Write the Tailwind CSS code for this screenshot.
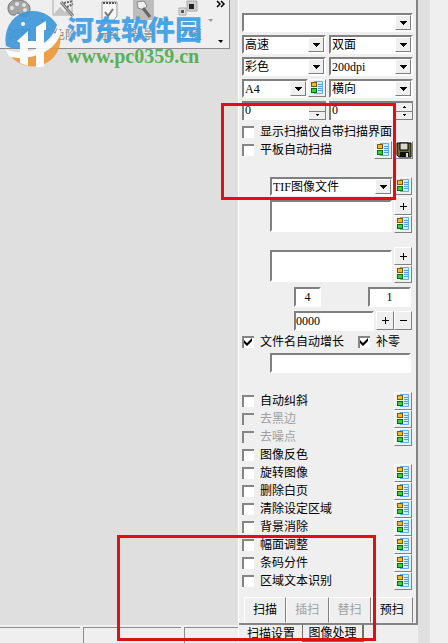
<!DOCTYPE html>
<html lang="zh-CN">
<head>
  <meta charset="UTF-8" />
  <meta name="viewport" content="width=device-width, initial-scale=1.0"/>
  <title>扫描设置</title>
  <script src="https://cdn.jsdelivr.net/npm/@tailwindcss/browser@4"></script>
</head>
<body class="flex min-h-screen bg-[#efefef] font-['Liberation_Serif','Noto_Sans_CJK_SC',serif] text-[12px] leading-[14px] text-black">

  <!-- Shared icons -->
  <svg class="hidden">
    <symbol id="props" viewBox="0 0 16 16">
      <path d="M6 1h8v13H6z" fill="#d3ebff"/>
      <path d="M5 1.5h8.5v12H5" fill="none" stroke="#62b0f4"/>
      <path d="M9 4.5h4M9 6.5h4M9 8.5h4M9 10.5h4" stroke="#4f9dea"/>
      <rect x="2.5" y="2.5" width="5" height="4" fill="#f0bd20" stroke="#80560c"/>
      <rect x="2.5" y="8.5" width="5" height="4" fill="#35d435" stroke="#0a6b12"/>
    </symbol>
    <symbol id="save" viewBox="0 0 16 16">
      <path d="M1 1h14v14H3l-2-2z" fill="#6b6b22" stroke="#000"/>
      <path d="M4 1h8v7H4z" fill="#d8d8d8" stroke="#000"/>
      <path d="M4 10h9v5H4z" fill="#111"/>
      <path d="M10 11h2v4h-2z" fill="#ddd"/>
    </symbol>
    <symbol id="down" viewBox="0 0 7 4"><path d="M0 0h7v1H6v1H5v1H4v1H3V3H2V2H1V1H0z"/></symbol>
    <symbol id="tiny-up" viewBox="0 0 3 2"><path d="M1 0h1v1h1v1H0V1h1z"/></symbol>
    <symbol id="tiny-down" viewBox="0 0 3 2"><path d="M0 0h3v1H2v1H1V1H0z"/></symbol>
    <symbol id="tick" viewBox="0 0 8 8"><path d="M0 2l3 3 5-5v3L3 8 0 5z"/></symbol>
    <symbol id="plus" viewBox="0 0 7 7"><path d="M3 0h1v3h3v1H4v3H3V4H0V3h3z"/></symbol>
    <symbol id="minus" viewBox="0 0 7 7"><path d="M0 3h7v1H0z"/></symbol>
  </svg>

  <!-- Work area -->
  <div class="flex min-w-0 flex-1 flex-col bg-[#dfdfdf]">
    <header class="relative mr-2 h-[49px] border-r border-b border-[#8c8c8c] bg-[#efefef] text-[#8a8a8a]">
      <svg class="absolute top-0 left-0" width="229" height="48" viewBox="0 0 229 48">
        <!-- palette -->
        <path d="M8 8C8 2 14-1 20 0c7 1 10 5 10 9s-3 8-7 8c-3 0-3-4-5-4s-2 3-5 2c-3 0-5-3-5-7z" fill="#a5a5a5" stroke="#777"/>
        <g fill="#e2e2e2"><circle cx="12" cy="8" r="2"/><circle cx="17" cy="4" r="2"/><circle cx="24" cy="5" r="2"/><circle cx="25" cy="10" r="2"/></g>
        <!-- levels -->
        <path d="M53-1h19v16H53z" fill="#eee" stroke="#aaa"/>
        <path d="M53 15l7-8 5 5 3-3 4 6z" fill="#c5c5c5"/>
        <path d="M61 2l12 14" stroke="#777" stroke-width="3"/>
        <path d="M61 2l12 14" stroke="#ccc"/>
        <path d="M64 3l9-2M67 7l6-3" stroke="#666" stroke-width="2" stroke-dasharray="2 1"/>
        <!-- page mark -->
        <path d="M102 2h15v14l-3 4h-12z" fill="#f6f6f6" stroke="#999"/>
        <path d="M103 3h13" stroke="#555" stroke-width="2" stroke-dasharray="2 1"/>
        <path d="M105 12l3 4 5-7" fill="none" stroke="#777" stroke-width="2"/>
        <!-- background -->
        <path d="M133 0h21v20h-21z" fill="#bdbdbd"/>
        <path d="M137 2l7-1 3 5-3 4-6-2z" fill="#efefef" stroke="#888"/>
        <path d="M143 8l7 9" stroke="#666" stroke-width="3"/>
        <!-- threshold -->
        <path d="M187 1h10v10h-10z" fill="#ccc" stroke="#aaa"/>
        <path d="M189 4h5v5h-5z" fill="#222"/>
        <path d="M179 8h7v7h-7z" fill="#ddd" stroke="#aaa"/>
        <path d="M181 10h3v3h-3z" fill="#555"/>
        <path d="M40 19h5l-2 3zM164 19h5l-2 3zM208 19h5l-2 3z" fill="#999"/>
        <path d="M217 1l3 3-3 3M221 1l3 3-3 3" fill="none" stroke="#000" stroke-width="1.5"/>
        <path d="M218 40h5l-2 3z"/>
      </svg>
      <nav class="flex pt-[28px] pl-[7px]">
        <a href="#" class="w-[46px]">调整</a>
        <a href="#" class="w-[44px]">色阶</a>
        <a href="#" class="w-[34px]">标红</a>
        <a href="#" class="w-[47px]">背景</a>
        <a href="#">二值</a>
      </nav>

      <!-- Site mark over the toolbar -->
      <div class="absolute top-[10px] left-[5px] flex gap-[5px] opacity-90">
        <svg width="57" height="57" viewBox="0 0 57 57">
          <path d="M1 36C-2 20 7 3 25 1c12-1 22 5 27 14-3 9-9 17-18 20-12 4-24 6-33 1z" fill="#3b97d8"/>
          <path d="M55 21c2 12-1 24-12 31-13 8-29 5-38-7 10 2 22 1 32-4 9-5 15-12 18-20z" fill="#ee9838"/>
          <!-- towers with the bridge between -->
          <path d="M12 31l11-10v35l-8-3V33zM31 17l10-6v9h-2v37h-8zM23 31h8v7h-8z" fill="#fff"/>
          <path d="M0 39c14 6 30 3 41-5 6-5 10-10 12-17l3 5c-3 12-13 20-24 23-11 4-21 4-28 1z" fill="#fff"/>
          <circle cx="18" cy="14" r="2" fill="#fff"/>
        </svg>
        <div class="pt-[6px]">
          <p class="text-[27px] leading-[30px] font-black whitespace-nowrap text-[#3a9ce6]">河东软件园</p>
          <p class="text-[20px] leading-[20px] font-bold text-[#4aac4a]">www.pc0359.cn</p>
        </div>
      </div>
    </header>
    <main class="flex-1"></main>
    <footer class="flex h-[18px] gap-[3px] bg-[#efefef] pt-[2px]">
      <div class="w-[80px] border-t border-[#8c8c8c]"></div>
      <div class="w-[98px] border-t border-l border-[#8c8c8c]"></div>
      <div class="flex-1 border-t border-l border-[#8c8c8c]"></div>
    </footer>
  </div>

  <!-- Scan settings -->
  <aside class="relative w-[180px] shrink-0 border-l border-white">
    <form class="border-r-2 border-b-2 border-[#858585] pt-[13px] pr-[3px] pl-[3px]">
      <div class="grid grid-cols-[84px_84px] gap-[3px]">
        <label class="col-span-2 grid h-[19px] border-2 border-t-[#808080] border-r-white border-b-white border-l-[#808080] bg-white">
          <select aria-label="扫描仪" class="col-start-1 row-start-1 appearance-none"><option></option></select>
          <span class="pointer-events-none col-start-1 row-start-1 grid w-4 place-items-center justify-self-end border border-t-white border-r-[#808080] border-b-[#808080] border-l-white bg-[#efefef]"><svg width="7" height="4"><use href="#down"/></svg></span>
        </label>
        <label class="grid h-[19px] border-2 border-t-[#808080] border-r-white border-b-white border-l-[#808080] bg-white">
          <select aria-label="速度" class="col-start-1 row-start-1 appearance-none pl-px"><option>高速</option></select>
          <span class="pointer-events-none col-start-1 row-start-1 grid w-4 place-items-center justify-self-end border border-t-white border-r-[#808080] border-b-[#808080] border-l-white bg-[#efefef]"><svg width="7" height="4"><use href="#down"/></svg></span>
        </label>
        <label class="grid h-[19px] border-2 border-t-[#808080] border-r-white border-b-white border-l-[#808080] bg-white">
          <select aria-label="单双面" class="col-start-1 row-start-1 appearance-none pl-px"><option>双面</option></select>
          <span class="pointer-events-none col-start-1 row-start-1 grid w-4 place-items-center justify-self-end border border-t-white border-r-[#808080] border-b-[#808080] border-l-white bg-[#efefef]"><svg width="7" height="4"><use href="#down"/></svg></span>
        </label>
        <label class="grid h-[19px] border-2 border-t-[#808080] border-r-white border-b-white border-l-[#808080] bg-white">
          <select aria-label="色彩" class="col-start-1 row-start-1 appearance-none pl-px"><option>彩色</option></select>
          <span class="pointer-events-none col-start-1 row-start-1 grid w-4 place-items-center justify-self-end border border-t-white border-r-[#808080] border-b-[#808080] border-l-white bg-[#efefef]"><svg width="7" height="4"><use href="#down"/></svg></span>
        </label>
        <label class="grid h-[19px] border-2 border-t-[#808080] border-r-white border-b-white border-l-[#808080] bg-white">
          <select aria-label="分辨率" class="col-start-1 row-start-1 appearance-none pl-px"><option>200dpi</option></select>
          <span class="pointer-events-none col-start-1 row-start-1 grid w-4 place-items-center justify-self-end border border-t-white border-r-[#808080] border-b-[#808080] border-l-white bg-[#efefef]"><svg width="7" height="4"><use href="#down"/></svg></span>
        </label>
        <div class="flex">
          <label class="grid h-[19px] flex-1 border-2 border-t-[#808080] border-r-white border-b-white border-l-[#808080] bg-white">
            <select aria-label="纸张" class="col-start-1 row-start-1 appearance-none pl-px"><option>A4</option></select>
            <span class="pointer-events-none col-start-1 row-start-1 grid w-4 place-items-center justify-self-end border border-t-white border-r-[#808080] border-b-[#808080] border-l-white bg-[#efefef]"><svg width="7" height="4"><use href="#down"/></svg></span>
          </label>
          <button type="button" aria-label="纸张属性" class="grid h-[18px] w-[18px] place-items-center border border-t-white border-r-[#808080] border-b-[#808080] border-l-white"><svg width="16" height="16"><use href="#props"/></svg></button>
        </div>
        <label class="grid h-[19px] border-2 border-t-[#808080] border-r-white border-b-white border-l-[#808080] bg-white">
          <select aria-label="方向" class="col-start-1 row-start-1 appearance-none pl-px"><option>横向</option></select>
          <span class="pointer-events-none col-start-1 row-start-1 grid w-4 place-items-center justify-self-end border border-t-white border-r-[#808080] border-b-[#808080] border-l-white bg-[#efefef]"><svg width="7" height="4"><use href="#down"/></svg></span>
        </label>
        <div class="flex h-[19px] border-t-2 border-l-2 border-[#808080] bg-white">
          <input aria-label="亮度" value="0" class="h-[14px] min-w-0 flex-1 pl-px" />
          <div class="grid w-[17px] grid-rows-2 bg-[#efefef]">
            <button type="button" aria-label="增加亮度" class="grid place-items-center border-r border-b border-[#808080]"></button>
            <button type="button" aria-label="减少亮度" class="grid place-items-center border-r border-b border-[#808080]"><svg width="3" height="2"><use href="#tiny-down"/></svg></button>
          </div>
        </div>
        <div class="flex h-[19px] border-t-2 border-l-2 border-[#808080] bg-white">
          <input aria-label="对比度" value="0" class="h-[14px] min-w-0 flex-1 pl-px" />
          <div class="grid w-[17px] grid-rows-2 bg-[#efefef]">
            <button type="button" aria-label="增加对比度" class="grid place-items-center border-r border-b border-[#808080]"><svg width="3" height="2"><use href="#tiny-up"/></svg></button>
            <button type="button" aria-label="减少对比度" class="grid place-items-center border-r border-b border-[#808080]"><svg width="3" height="2"><use href="#tiny-down"/></svg></button>
          </div>
        </div>
      </div>

      <label class="mt-[3px] flex h-[18px] items-center gap-[6px] whitespace-nowrap">
        <input type="checkbox" class="size-3 appearance-none border-t-2 border-l-2 border-[#858585] bg-white" />显示扫描仪自带扫描界面
      </label>
      <div class="flex h-[18px] items-center">
        <label class="flex flex-1 items-center gap-[6px]">
          <input type="checkbox" class="size-3 appearance-none border-t-2 border-l-2 border-[#858585] bg-white" />平板自动扫描
        </label>
        <button type="button" aria-label="平板属性" class="mr-[3px] grid h-[18px] w-[18px] place-items-center border border-t-white border-r-[#808080] border-b-[#808080] border-l-white"><svg width="16" height="16"><use href="#props"/></svg></button>
        <button type="button" aria-label="保存" class="grid h-[18px] w-[18px] place-items-center border border-t-white border-r-[#808080] border-b-[#808080] border-l-white"><svg width="16" height="16"><use href="#save"/></svg></button>
      </div>

      <!-- File output -->
      <div class="mt-[18px] flex h-[20px] justify-between pr-px pl-[28px]">
        <label class="grid h-[19px] w-[123px] border-2 border-t-[#808080] border-r-white border-b-white border-l-[#808080] bg-white">
          <select aria-label="文件格式" class="col-start-1 row-start-1 appearance-none pl-px"><option>TIF图像文件</option></select>
          <span class="pointer-events-none col-start-1 row-start-1 grid w-4 place-items-center justify-self-end border border-t-white border-r-[#808080] border-b-[#808080] border-l-white bg-[#efefef]"><svg width="7" height="4"><use href="#down"/></svg></span>
        </label>
        <button type="button" aria-label="格式属性" class="grid h-[18px] w-[18px] place-items-center border border-t-white border-r-[#808080] border-b-[#808080] border-l-white"><svg width="16" height="16"><use href="#props"/></svg></button>
      </div>
      <div class="flex justify-between pr-px pl-[28px]">
        <textarea aria-label="保存路径" class="mt-[3px] h-8 w-[122px] resize-none border-2 border-t-[#808080] border-r-white border-b-white border-l-[#808080] bg-white"></textarea>
        <div class="flex w-[18px] flex-col">
          <button type="button" aria-label="添加路径" class="grid h-[18px] place-items-center border border-t-white border-r-[#808080] border-b-[#808080] border-l-white"><svg width="7" height="7"><use href="#plus"/></svg></button>
          <button type="button" aria-label="路径属性" class="grid h-[18px] place-items-center border border-t-white border-r-[#808080] border-b-[#808080] border-l-white"><svg width="16" height="16"><use href="#props"/></svg></button>
        </div>
      </div>
      <div class="mt-[14px] flex justify-between pr-px pl-[28px]">
        <textarea aria-label="文件名前缀" class="mt-[3px] h-8 w-[122px] resize-none border-2 border-t-[#808080] border-r-white border-b-white border-l-[#808080] bg-white"></textarea>
        <div class="flex w-[18px] flex-col">
          <button type="button" aria-label="添加前缀" class="grid h-[18px] place-items-center border border-t-white border-r-[#808080] border-b-[#808080] border-l-white"><svg width="7" height="7"><use href="#plus"/></svg></button>
          <button type="button" aria-label="前缀属性" class="grid h-[18px] place-items-center border border-t-white border-r-[#808080] border-b-[#808080] border-l-white"><svg width="16" height="16"><use href="#props"/></svg></button>
        </div>
      </div>
      <div class="mt-1 flex justify-between pr-[2px] pl-[52px]">
        <input aria-label="位数" value="4" class="h-5 w-[27px] border-2 border-t-[#808080] border-r-white border-b-white border-l-[#808080] bg-white text-center" />
        <input aria-label="步长" value="1" class="h-5 w-[43px] border-2 border-t-[#808080] border-r-white border-b-white border-l-[#808080] bg-white text-center" />
      </div>
      <div class="mt-1 flex pl-[52px]">
        <input aria-label="起始编号" value="0000" class="mr-[2px] h-5 w-[80px] border-2 border-t-[#808080] border-r-white border-b-white border-l-[#808080] bg-white" />
        <button type="button" aria-label="编号加一" class="grid h-[19px] w-[18px] place-items-center border border-t-white border-r-[#808080] border-b-[#808080] border-l-white"><svg width="7" height="7"><use href="#plus"/></svg></button>
        <button type="button" aria-label="编号减一" class="grid h-[19px] w-[18px] place-items-center border border-t-white border-r-[#808080] border-b-[#808080] border-l-white"><svg width="7" height="7"><use href="#minus"/></svg></button>
      </div>
      <div class="mt-[2px] flex h-[18px] items-center">
        <label class="flex w-[116px] items-center">
          <span class="mr-[6px] grid place-items-center">
            <input type="checkbox" checked class="peer col-start-1 row-start-1 size-3 appearance-none border-t-2 border-l-2 border-[#858585] bg-white" />
            <svg width="8" height="8" class="pointer-events-none invisible col-start-1 row-start-1 peer-checked:visible"><use href="#tick"/></svg>
          </span>文件名自动增长
        </label>
        <label class="flex items-center">
          <span class="mr-[6px] grid place-items-center">
            <input type="checkbox" checked class="peer col-start-1 row-start-1 size-3 appearance-none border-t-2 border-l-2 border-[#858585] bg-white" />
            <svg width="8" height="8" class="pointer-events-none invisible col-start-1 row-start-1 peer-checked:visible"><use href="#tick"/></svg>
          </span>补零
        </label>
      </div>
      <div class="mt-[2px] flex pr-[2px] pl-[28px]">
        <input aria-label="文件名预览" class="h-5 min-w-0 flex-1 border-2 border-t-[#808080] border-r-white border-b-white border-l-[#808080] bg-white" />
      </div>

      <!-- Image processing options, filled below -->
      <ul id="options" class="mt-[19px]"></ul>

      <div class="mt-[7px] flex pl-[2px]">
        <button type="button" class="h-[26px] flex-1 border border-t-white border-r-[#808080] border-b-[#efefef] border-l-white">扫描</button>
        <button type="button" disabled class="h-[26px] flex-1 border border-t-white border-r-[#808080] border-b-[#efefef] border-l-white text-[#a0a0a0]">插扫</button>
        <button type="button" disabled class="h-[26px] flex-1 border border-t-white border-r-[#808080] border-b-[#efefef] border-l-white text-[#a0a0a0]">替扫</button>
        <button type="button" class="h-[26px] flex-1 border border-t-white border-r-[#808080] border-b-[#efefef] border-l-white">预扫</button>
      </div>
    </form>
    <nav class="flex pl-[5px]">
      <button type="button" class="h-[17px] w-[58px] pl-[3px] text-left">扫描设置</button>
      <button type="button" class="h-[17px] w-[62px] border-r-2 border-b border-l border-[#707070] text-center">图像处理</button>
    </nav>

    <!-- Highlight frames -->
    <div class="pointer-events-none absolute top-[103px] -left-[18px] h-[97px] w-[175px] border-3 border-[#e01010]"></div>
    <div class="pointer-events-none absolute top-[535px] -left-[122px] h-[106px] w-[259px] border-3 border-[#e01010]"></div>
  </aside>

  <div class="w-3 shrink-0 bg-[#dfdfdf]"></div>
  <div class="w-[18px] shrink-0"></div>

  <script>
    const options = [
      { name: "自动纠斜", props: true },
      { name: "去黑边", props: true, disabled: true },
      { name: "去噪点", props: true, disabled: true },
      { name: "图像反色" },
      { name: "旋转图像", props: true },
      { name: "删除白页", props: true },
      { name: "清除设定区域", props: true },
      { name: "背景消除", props: true },
      { name: "幅面调整", props: true },
      { name: "条码分件", props: true },
      { name: "区域文本识别", props: true }
    ];

    document.getElementById("options").innerHTML = options.map(o => `
      <li class="flex h-[18px] items-center justify-between pr-px">
        <label class="flex items-center gap-[6px] ${o.disabled ? "text-[#a0a0a0]" : ""}">
          <input type="checkbox" ${o.disabled ? "disabled" : ""} class="size-3 appearance-none border-t-2 border-l-2 border-[#858585] bg-white disabled:bg-[#efefef]" />${o.name}
        </label>
        ${o.props ? `<button type="button" aria-label="${o.name}属性" class="grid h-[18px] w-[18px] place-items-center border border-t-white border-r-[#808080] border-b-[#808080] border-l-white"><svg width="16" height="16"><use href="#props"/></svg></button>` : ""}
      </li>`).join("");
  </script>
</body>
</html>
